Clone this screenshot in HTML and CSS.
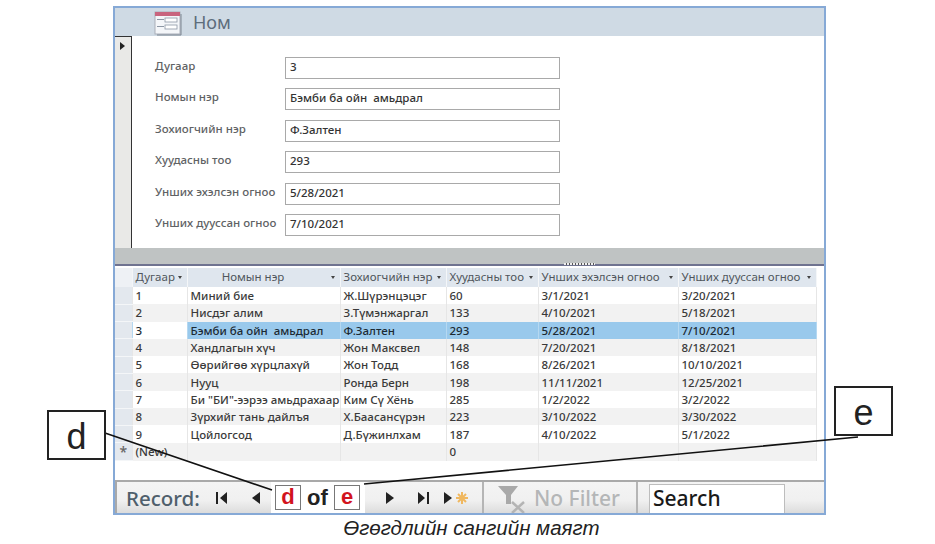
FILE: index.html
```html
<!DOCTYPE html>
<html lang="mn">
<head>
  <meta charset="UTF-8">
  <title>Өгөгдлийн сангийн маягт</title>
  <link rel="stylesheet" href="styles.css">
</head>
<body>
  <div class="frame">
    <div class="form-head">
      <svg class="form-icon" width="28" height="25" viewBox="0 0 28 25">
        <rect x="1" y="1" width="25" height="22" fill="#f4f6f9" stroke="#a9aeb8"/>
        <rect x="1" y="1" width="25" height="4" fill="#c8647e"/>
        <rect x="3" y="8" width="7" height="1" fill="#8d97a5"/>
        <rect x="11" y="7" width="12" height="4" fill="#fff" stroke="#8d97a5" stroke-width=".8"/>
        <rect x="3" y="15" width="7" height="1" fill="#8d97a5"/>
        <rect x="11" y="14" width="12" height="4" fill="#fff" stroke="#8d97a5" stroke-width=".8"/>
        <path d="M27 3v21H3" fill="none" stroke="#7d8590"/>
      </svg>
      <span class="form-title">Ном</span>
    </div>

    <div class="form-body">
      <div class="record-sel"><span class="sel-arrow"></span></div>
      <div class="fields">
        <div class="field"><label>Дугаар</label><div class="input">3</div></div>
        <div class="field"><label>Номын нэр</label><div class="input">Бэмби ба ойн&nbsp; амьдрал</div></div>
        <div class="field"><label>Зохиогчийн нэр</label><div class="input">Ф.Залтен</div></div>
        <div class="field"><label>Хуудасны тоо</label><div class="input">293</div></div>
        <div class="field"><label>Унших эхэлсэн огноо</label><div class="input">5/28/2021</div></div>
        <div class="field"><label>Унших дууссан огноо</label><div class="input">7/10/2021</div></div>
      </div>
    </div>

    <div class="splitter"><span class="grip"></span></div>

    <div class="sheet">
      <table>
        <colgroup>
          <col class="c0"><col class="c1"><col class="c2"><col class="c3"><col class="c4"><col class="c5"><col class="c6">
        </colgroup>
        <thead>
          <tr>
            <th class="sel"></th>
            <th><span>Дугаар</span><i></i></th>
            <th class="center"><span>Номын нэр</span><i></i></th>
            <th><span>Зохиогчийн нэр</span><i></i></th>
            <th><span>Хуудасны тоо</span><i></i></th>
            <th><span>Унших эхэлсэн огноо</span><i></i></th>
            <th><span>Унших дууссан огноо</span><i></i></th>
          </tr>
        </thead>
        <tbody>
          <tr><td class="sel"></td><td>1</td><td>Миний бие</td><td>Ж.Шүрэнцэцэг</td><td>60</td><td>3/1/2021</td><td>3/20/2021</td></tr>
          <tr><td class="sel"></td><td>2</td><td>Нисдэг алим</td><td>З.Түмэнжаргал</td><td>133</td><td>4/10/2021</td><td>5/18/2021</td></tr>
          <tr class="current"><td class="sel"></td><td>3</td><td>Бэмби ба ойн&nbsp; амьдрал</td><td>Ф.Залтен</td><td>293</td><td>5/28/2021</td><td>7/10/2021</td></tr>
          <tr><td class="sel"></td><td>4</td><td>Хандлагын хүч</td><td>Жон Максвел</td><td>148</td><td>7/20/2021</td><td>8/18/2021</td></tr>
          <tr><td class="sel"></td><td>5</td><td>Өөрийгөө хүрцлахүй</td><td>Жон Тодд</td><td>168</td><td>8/26/2021</td><td>10/10/2021</td></tr>
          <tr><td class="sel"></td><td>6</td><td>Нууц</td><td>Ронда Берн</td><td>198</td><td>11/11/2021</td><td>12/25/2021</td></tr>
          <tr><td class="sel"></td><td>7</td><td>Би "БИ"-ээрээ амьдрахаар</td><td>Ким Сү Хёнь</td><td>285</td><td>1/2/2022</td><td>3/2/2022</td></tr>
          <tr><td class="sel"></td><td>8</td><td>Зүрхийг тань дайлъя</td><td>Х.Баасансүрэн</td><td>223</td><td>3/10/2022</td><td>3/30/2022</td></tr>
          <tr><td class="sel"></td><td>9</td><td>Цойлогсод</td><td>Д.Бүжинлхам</td><td>187</td><td>4/10/2022</td><td>5/1/2022</td></tr>
          <tr><td class="sel star">*</td><td>(New)</td><td></td><td></td><td>0</td><td></td><td></td></tr>
        </tbody>
      </table>
    </div>

    <div class="nav">
      <span class="nav-label">Record:</span>
      <svg class="nav-first" width="14" height="14" viewBox="0 0 14 14"><path d="M1 1h2v12H1zM12 1v12L5 7z" fill="#222"/></svg>
      <svg class="nav-prev" width="11" height="14" viewBox="0 0 11 14"><path d="M10 1v12L2 7z" fill="#222"/></svg>
      <div class="nav-current">
        <span class="red-box">d</span>
        <span class="of">of</span>
        <span class="red-box">e</span>
      </div>
      <svg class="nav-next" width="11" height="14" viewBox="0 0 11 14"><path d="M1 1v12l8-6z" fill="#222"/></svg>
      <svg class="nav-last" width="14" height="14" viewBox="0 0 14 14"><path d="M11 1h2v12h-2zM2 1v12l7-6z" fill="#222"/></svg>
      <svg class="nav-new" width="28" height="16" viewBox="0 0 28 16">
        <path d="M1 2v12l8-6z" fill="#222"/>
        <path d="M19 2v12M13 8h12M15 4l8 8M23 4l-8 8" stroke="#f0b860" stroke-width="2"/>
      </svg>
      <div class="nav-filter">
        <svg width="32" height="30" viewBox="0 0 32 30">
          <path d="M1 2h20l-7 9v9h-5v-9z" fill="#a9a9a9"/>
          <path d="M15 18l12 11M27 18L15 29" stroke="#b4b4b4" stroke-width="2.5"/>
        </svg>
        <span>No Filter</span>
      </div>
      <div class="nav-search">Search</div>
    </div>
  </div>

  <svg class="lines" width="935" height="544" viewBox="0 0 935 544">
    <path d="M105 433L272 490M858 437L364 484" stroke="#111" stroke-width="1.6" fill="none"/>
  </svg>
  <div class="callout callout-d">d</div>
  <div class="callout callout-e">e</div>

  <p class="caption">Өгөгдлийн сангийн маягт</p>
</body>
</html>
```

FILE: styles.css
```css
html, body {
  margin: 0;
  padding: 0;
}
body {
  position: relative;
  width: 935px;
  height: 544px;
  overflow: hidden;
  background: #fff;
  font-family: 'Noto Sans', 'Open Sans', sans-serif;
  font-size: 11.5px;
  font-weight: 500;
  color: #333;
}
.frame {
  box-sizing: border-box;
  width: 713px;
  height: 509px;
  margin: 6px 0 0 113px;
  border: 2px solid #86a9d6;
  background: #fff;
  display: flex;
  flex-direction: column;
}

/* form header */
.form-head {
  height: 28px;
  background: #cfdae4;
  display: flex;
  align-items: center;
  padding-left: 39px;
  flex: none;
}
.form-icon {
  margin-top: 2px;
}
.form-title {
  margin-left: 11px;
  font-size: 18px;
  font-weight: 400;
  color: #5d6d7c;
}

/* single record part */
.form-body {
  height: 212px;
  display: flex;
  flex: none;
}
.record-sel {
  box-sizing: border-box;
  width: 17px;
  background: #e9e9e7;
  border-top: 1px solid #333;
  border-right: 1.5px solid #333;
  padding: 5px 0 0 5px;
}
.sel-arrow {
  display: block;
  width: 0;
  height: 0;
  border-left: 5px solid #222;
  border-top: 4px solid transparent;
  border-bottom: 4px solid transparent;
}
.fields {
  padding: 21px 0 0 23px;
  display: flex;
  flex-direction: column;
  gap: 9.4px;
}
.field {
  display: flex;
  align-items: center;
  height: 22px;
}
.field label {
  width: 130px;
  margin-top: -5px;
  color: #606264;
  white-space: nowrap;
}
.input {
  box-sizing: border-box;
  width: 275px;
  height: 22px;
  line-height: 18px;
  padding-left: 4px;
  border: 1px solid #a9a9a9;
  color: #333;
}

.splitter {
  position: relative;
  height: 16px;
  flex: none;
  background: #bfc3c3;
  border-bottom: 2px solid #6f7390;
}
.grip {
  position: absolute;
  left: 449px;
  bottom: -1px;
  width: 31px;
  height: 2px;
  background: repeating-linear-gradient(to right, #eee 0 2px, #555 2px 3px);
}

/* datasheet */
.sheet {
  flex: 1;
  padding-top: 2px;
}
table {
  border-collapse: collapse;
  table-layout: fixed;
  width: 701px;
}
.c0 { width: 17px; }
.c1 { width: 55px; }
.c2 { width: 153px; }
.c3 { width: 106px; }
.c4 { width: 92px; }
.c5 { width: 140px; }
.c6 { width: 138px; }
th {
  position: relative;
  box-sizing: border-box;
  height: 19px;
  padding: 0 0 2px 3px;
  line-height: 16px;
  text-align: left;
  font-weight: 400;
  color: #50565c;
  background: #dfe6ee;
  border-right: 1px solid #f4f6f8;
  white-space: nowrap;
}
th.center {
  text-align: center;
  padding-right: 24px;
}
th i {
  position: absolute;
  right: 5px;
  top: 8px;
  width: 0;
  height: 0;
  border-top: 3px solid #444;
  border-left: 2px solid transparent;
  border-right: 2px solid transparent;
}
td {
  box-sizing: border-box;
  height: 17.3px;
  padding: 0 0 0 3px;
  line-height: 15px;
  border-right: 1px solid #e6e6e6;
  color: #3a3a3a;
  white-space: nowrap;
  overflow: hidden;
}
tbody tr:nth-child(even) td {
  background: #f2f2f2;
}
tr.current td {
  background: #99c9ec;
  color: #1c2a33;
  border-right-color: #b5d8f1;
}
tr.current td:nth-child(2) {
  background: #fff;
}
th.sel {
  background: #eef1f5;
}
td.sel, tbody tr:nth-child(even) td.sel, tr.current td.sel {
  background: #e3e8ee;
  border-bottom: 1px solid #f4f6f8;
  padding: 0;
  text-align: center;
  color: #666;
}
td.star {
  font-size: 14px;
  line-height: 17px;
}

/* record navigation */
.nav {
  height: 33px;
  flex: none;
  display: flex;
  align-items: center;
  box-sizing: border-box;
  border-top: 2px solid #a9a9a9;
  border-left: 2px solid #a9a9a9;
  background: linear-gradient(to bottom, #f4f4f4, #f0f0f0 60%, #dcdcdc);
  overflow: hidden;
}
.nav-label {
  margin-left: 9px;
  width: 78px;
  font-size: 20.5px;
  color: #4f5f6c;
}
.nav-first { margin-left: 11px; }
.nav-prev { margin-left: 21px; }
.nav-current {
  box-sizing: border-box;
  width: 94px;
  height: 31px;
  margin-left: 10px;
  background: #fff;
  display: flex;
  align-items: center;
  padding-left: 4px;
  gap: 6px;
}
.red-box {
  box-sizing: border-box;
  width: 26px;
  height: 25px;
  border: 1px solid #777;
  background: #fff;
  color: #d2141e;
  font-family: 'Liberation Sans', sans-serif;
  font-size: 22px;
  font-weight: 700;
  line-height: 22px;
  text-align: center;
}
.of {
  width: 21px;
  font-family: 'Liberation Sans', sans-serif;
  font-size: 22px;
  font-weight: 700;
  color: #222;
  text-align: center;
}
.nav-next { margin-left: 20px; }
.nav-last { margin-left: 20px; }
.nav-new { margin-left: 13px; }
.nav-filter {
  box-sizing: border-box;
  width: 156px;
  height: 31px;
  margin-left: 11px;
  border-left: 2px solid #b5b5b5;
  border-right: 2px solid #b5b5b5;
  padding-left: 13px;
  display: flex;
  align-items: center;
  gap: 5px;
  font-size: 21px;
  color: #b4b6b7;
  white-space: nowrap;
}
.nav-filter svg {
  margin-top: 2px;
  flex: none;
}
.nav-search {
  box-sizing: border-box;
  width: 136px;
  height: 29px;
  margin: 2px 0 0 11px;
  padding-left: 3px;
  background: #fff;
  border: 1px solid #bdbdbd;
  border-bottom: none;
  font-size: 21px;
  line-height: 27px;
  color: #1a1a1a;
}

/* callouts over the screenshot */
.lines {
  position: absolute;
  left: 0;
  top: 0;
}
.callout {
  position: absolute;
  box-sizing: border-box;
  width: 59px;
  height: 50px;
  border: 2px solid #222;
  background: #fff;
  font-family: 'Liberation Sans', sans-serif;
  font-size: 36px;
  font-weight: 400;
  line-height: 49px;
  text-align: center;
  color: #222;
}
.callout-d { left: 47px; top: 410px; }
.callout-e { left: 834px; top: 386px; }

.caption {
  position: absolute;
  left: 0;
  right: 0;
  top: 516px;
  margin: 0;
  padding-left: 8px;
  text-align: center;
  font-family: 'Liberation Sans', sans-serif;
  font-style: italic;
  font-weight: 400;
  font-size: 20.5px;
  color: #222;
}
```
